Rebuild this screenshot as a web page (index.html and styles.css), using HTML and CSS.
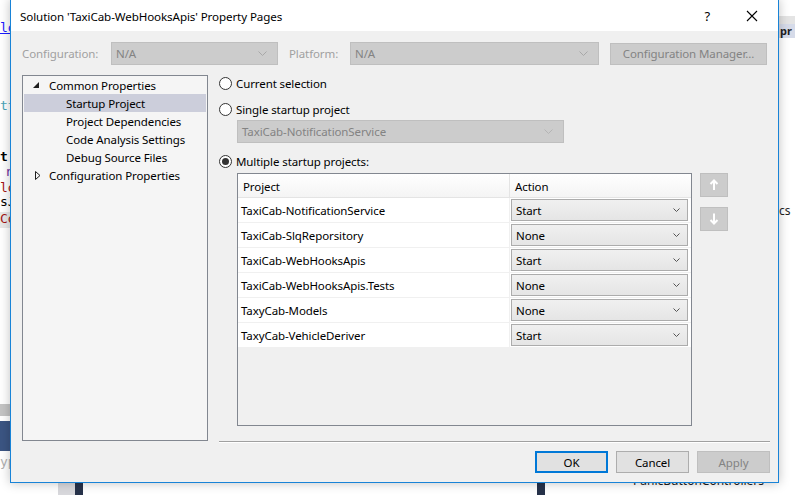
FILE: index.html
```html
<!DOCTYPE html>
<html>
<head>
<meta charset="utf-8">
<link rel="stylesheet" href="styles.css">
</head>
<body>
<div class="desktop">
  <div class="bg-left">
    <span class="c1">lo</span>
    <span class="c2">tt</span>
    <span class="c3">t</span>
    <span class="c4">r</span>
    <span class="c5">lo</span>
    <span class="c6">sJ</span>
    <span class="c7">Co</span>
    <span class="c8"></span>
    <span class="c9"></span>
    <span class="c10">yp</span>
  </div>
  <div class="bg-right">
    <span class="r1"></span>
    <span class="r2">pr</span>
    <span class="r3">cs</span>
  </div>
  <div class="bg-bottom">
    <span class="b1"></span>
    <span class="b2"></span>
    <span class="b4"></span>
    <span class="b3">PanicButtonControllers</span>
  </div>

  <div class="dialog">
    <div class="titlebar">
      <span class="title">Solution 'TaxiCab-WebHooksApis' Property Pages</span>
      <span class="help">?</span>
      <svg class="close" width="12" height="12" viewBox="0 0 12 12"><path d="M1 1L11 11M11 1L1 11" stroke="#000" stroke-width="1.1" fill="none"/></svg>
    </div>
    <div class="body">
      <div class="configrow">
        <span class="lbl lbl-config">Configuration:</span>
        <div class="combo dis combo-config"><span>N/A</span><svg class="chev" width="9" height="5" viewBox="0 0 9 5"><path d="M0.5 0.5L4.5 4.5L8.5 0.5" stroke="#a8a8a8" fill="none"/></svg></div>
        <span class="lbl lbl-platform">Platform:</span>
        <div class="combo dis combo-platform"><span>N/A</span><svg class="chev" width="9" height="5" viewBox="0 0 9 5"><path d="M0.5 0.5L4.5 4.5L8.5 0.5" stroke="#a8a8a8" fill="none"/></svg></div>
        <div class="btn dis btn-cm">Configuration Manager...</div>
      </div>
      <div class="main">
        <div class="tree">
          <div class="node"><svg class="tri" width="6" height="6" viewBox="0 0 6 6"><path d="M6 0L6 6L0 6Z" fill="#1e1e1e"/></svg><span>Common Properties</span></div>
          <div class="node child sel"><span>Startup Project</span></div>
          <div class="node child"><span>Project Dependencies</span></div>
          <div class="node child"><span>Code Analysis Settings</span></div>
          <div class="node child"><span>Debug Source Files</span></div>
          <div class="node"><svg class="tri tri-c" width="6" height="9" viewBox="0 0 6 9"><path d="M0.5 0.5L5 4.5L0.5 8.5Z" fill="none" stroke="#1e1e1e"/></svg><span>Configuration Properties</span></div>
        </div>
        <div class="right">
          <div class="radio r-cur"><span class="circ"></span><span>Current selection</span></div>
          <div class="radio r-single"><span class="circ"></span><span>Single startup project</span></div>
          <div class="combo dis combo-single"><span>TaxiCab-NotificationService</span><svg class="chev" width="9" height="5" viewBox="0 0 9 5"><path d="M0.5 0.5L4.5 4.5L8.5 0.5" stroke="#b4b4b4" fill="none"/></svg></div>
          <div class="radio r-multi"><span class="circ on"><span class="dot"></span></span><span>Multiple startup projects:</span></div>
          <div class="gridwrap">
            <div class="grid">
              <div class="ghead">
                <div class="gc gp">Project</div>
                <div class="gc ga">Action</div>
              </div>
              <div class="grow"><div class="gc gp">TaxiCab-NotificationService</div><div class="gc ga"><div class="acombo"><span>Start</span><svg class="chev" width="7" height="4" viewBox="0 0 7 4"><path d="M0.5 0.5L3.5 3.5L6.5 0.5" stroke="#555" fill="none"/></svg></div></div></div>
              <div class="grow"><div class="gc gp">TaxiCab-SlqReporsitory</div><div class="gc ga"><div class="acombo"><span>None</span><svg class="chev" width="7" height="4" viewBox="0 0 7 4"><path d="M0.5 0.5L3.5 3.5L6.5 0.5" stroke="#555" fill="none"/></svg></div></div></div>
              <div class="grow"><div class="gc gp">TaxiCab-WebHooksApis</div><div class="gc ga"><div class="acombo"><span>Start</span><svg class="chev" width="7" height="4" viewBox="0 0 7 4"><path d="M0.5 0.5L3.5 3.5L6.5 0.5" stroke="#555" fill="none"/></svg></div></div></div>
              <div class="grow"><div class="gc gp">TaxiCab-WebHooksApis.Tests</div><div class="gc ga"><div class="acombo"><span>None</span><svg class="chev" width="7" height="4" viewBox="0 0 7 4"><path d="M0.5 0.5L3.5 3.5L6.5 0.5" stroke="#555" fill="none"/></svg></div></div></div>
              <div class="grow"><div class="gc gp">TaxyCab-Models</div><div class="gc ga"><div class="acombo"><span>None</span><svg class="chev" width="7" height="4" viewBox="0 0 7 4"><path d="M0.5 0.5L3.5 3.5L6.5 0.5" stroke="#555" fill="none"/></svg></div></div></div>
              <div class="grow"><div class="gc gp">TaxyCab-VehicleDeriver</div><div class="gc ga"><div class="acombo"><span>Start</span><svg class="chev" width="7" height="4" viewBox="0 0 7 4"><path d="M0.5 0.5L3.5 3.5L6.5 0.5" stroke="#555" fill="none"/></svg></div></div></div>
            </div>
            <div class="updown">
              <div class="ud"><svg width="10" height="12" viewBox="0 0 10 12"><path d="M5 1.5V11M1.5 5L5 1.5L8.5 5" stroke="#fff" stroke-width="2" fill="none"/></svg></div>
              <div class="ud"><svg width="10" height="12" viewBox="0 0 10 12"><path d="M5 0.5V10M1.5 7L5 10.5L8.5 7" stroke="#fff" stroke-width="2" fill="none"/></svg></div>
            </div>
          </div>
          <div class="sep"></div>
        </div>
      </div>
      <div class="buttons">
        <div class="btn ok">OK</div>
        <div class="btn">Cancel</div>
        <div class="btn dis">Apply</div>
      </div>
    </div>
  </div>
</div>
</body>
</html>
```

FILE: styles.css
```css
* { box-sizing: border-box; }
html, body { margin: 0; padding: 0; }
body {
  width: 795px; height: 495px; overflow: hidden;
  background: #ffffff;
  font-family: "Segoe UI", "Noto Sans", "Open Sans", sans-serif;
  font-size: 11.5px;
  letter-spacing: -0.1px;
  color: #000;
}
.desktop { position: relative; width: 795px; height: 495px; overflow: hidden; background: #fff; }

/* background fragments */
.bg-left span, .bg-right span, .bg-bottom span { position: absolute; font-family: "DejaVu Sans Mono", monospace; font-size: 13px; line-height: 14px; letter-spacing: 0; }
.c1 { left: 0; top: 21px; color: #1a1aff; text-decoration: underline; }
.c2 { left: 0; top: 99px; color: #4aa3b8; }
.c3 { left: 0; top: 150px; color: #000; font-weight: bold; }
.c4 { left: 5px; top: 165px; color: #7030a0; }
.c5 { left: 0; top: 181px; color: #a31515; }
.c6 { left: 0; top: 195px; color: #000; }
.c7 { left: 0; top: 212px; color: #a31515; background: #e8e8e8; width: 12px; height: 16px; }
.c8 { left: 0; top: 404px; width: 12px; height: 12px; background: #c4c4c4; }
.c9 { left: 0; top: 421px; width: 12px; height: 30px; background: #3b5583; }
.c10 { left: 0; top: 455px; color: #b0b0b0; }
.r1 { left: 778px; top: 16px; width: 17px; height: 8px; background: #e4e4e4; }
.r2 { left: 778px; top: 24px; width: 17px; height: 14px; background: #d6dbe9; font-weight: bold; color: #1e1e1e; font-family: "Noto Sans", sans-serif !important; font-size: 11px !important; padding-left: 2px; }
.r3 { left: 779px; top: 204px; color: #1e1e1e; font-family: "Noto Sans", sans-serif !important; font-size: 12px !important; }
.b1 { left: 58px; top: 482px; width: 17px; height: 13px; background: #d8d8dc; }
.b2 { left: 75px; top: 482px; width: 8px; height: 13px; background: #27324a; }
.b4 { left: 537px; top: 482px; width: 8px; height: 13px; background: #27324a; }
.b3 { left: 633px; top: 474px; color: #1e1e1e; font-family: "Noto Sans", sans-serif !important; font-size: 12px !important; }

/* dialog window */
.dialog {
  position: absolute; left: 10px; top: -1px; width: 769px; height: 484px;
  border: 1px solid #1883d7;
  background: #f0f0f0;
  box-shadow: 0 0 10px rgba(0,0,0,0.25);
  display: flex; flex-direction: column;
}
.titlebar {
  height: 31px; flex: none; background: #fff;
  display: flex; align-items: center;
  padding-left: 9px; padding-top: 1px;
}
.title { font-size: 11.6px; flex: 1; }
.help { font-size: 13px; margin-right: 36px; }
.close { margin-right: 20px; }

.body { flex: 1; display: flex; flex-direction: column; padding: 11px 8px 0 11px; }
.configrow { display: flex; align-items: center; height: 23px; color: #a0a0a0; }
.lbl-config { width: 89px; }
.lbl-platform { width: 61px; }
.combo {
  height: 23px; display: flex; align-items: center; justify-content: space-between;
  padding: 0 10px 0 4px; border: 1px solid #bfbfbf;
}
.combo.dis { background: #cccccc; color: #838383; }
.combo-config { width: 167px; margin-right: 11px; }
.combo-platform { width: 249px; margin-right: 11px; }
.btn {
  height: 22px; display: flex; align-items: center; justify-content: center;
  border: 1px solid #adadad; background: #e1e1e1;
}
.btn.dis { background: #cccccc; border-color: #bfbfbf; color: #838383; }
.btn-cm { width: 157px; }

.main { display: flex; margin-top: 10px; height: 368px; }
.tree {
  width: 186px; height: 366px; border: 1px solid #828790; background: #f5f5f5;
  padding: 0 1px 1px; margin-right: 11px; flex: none;
}
.node { height: 18px; display: flex; align-items: center; padding-left: 9px; }
.node .tri { margin-right: 10px; }
.node .tri-c { margin-left: 2px; margin-right: 8px; }
.node.child { padding-left: 42px; }
.node.sel { background: #cccedb; }

.right { flex: 1; display: flex; flex-direction: column; }
.radio { display: flex; align-items: center; height: 16px; }
.circ {
  width: 13px; height: 13px; border-radius: 50%; border: 1px solid #333;
  background: #fff; margin-right: 4px; display: flex; align-items: center; justify-content: center;
}
.dot { width: 7px; height: 7px; border-radius: 50%; background: #333; }
.r-cur { margin-top: 0; }
.r-single { margin-top: 10px; }
.combo-single { width: 327px; margin: 3px 0 0 18px; }
.r-multi { margin-top: 10px; }

.gridwrap { display: flex; margin-top: 4px; margin-left: 18px; }
.grid {
  width: 455px; height: 253px; border: 1px solid #828790; background: #f0f0f0;
}
.ghead { display: flex; height: 24px; background: linear-gradient(#ffffff, #f4f4f4); border-bottom: 1px solid #e4e4e4; }
.ghead .gc { display: flex; align-items: center; padding-top: 1px; }
.ghead .gp { width: 272px; padding-left: 5px; border-right: 1px solid #e4e4e4; }
.ghead .ga { padding-left: 5px; }
.grow { display: flex; height: 25px; background: #fff; border-bottom: 1px solid #f0f0f0; }
.grow .gp { width: 272px; display: flex; align-items: center; padding-left: 3px; border-right: 1px solid #f0f0f0; }
.grow .ga { flex: 1; padding: 1px 3px 0 1px; }
.acombo {
  height: 22px; border: 1px solid #acacac; background: linear-gradient(#f0f0f0, #e5e5e5);
  display: flex; align-items: center; justify-content: space-between; padding: 0 7px 0 4px;
}
.updown { margin-left: 8px; display: flex; flex-direction: column; gap: 10px; }
.ud {
  width: 28px; height: 24px; background: #cccccc; border: 1px solid #bfbfbf;
  display: flex; align-items: center; justify-content: center;
}
.sep { margin-top: auto; height: 2px; border-top: 1px solid #a0a0a0; border-bottom: 1px solid #fff; }

.buttons { display: flex; justify-content: flex-end; gap: 8px; margin-top: 8px; }
.buttons .btn { width: 73px; height: 22px; }
.btn.ok { border: 2px solid #0078d7; }
```
